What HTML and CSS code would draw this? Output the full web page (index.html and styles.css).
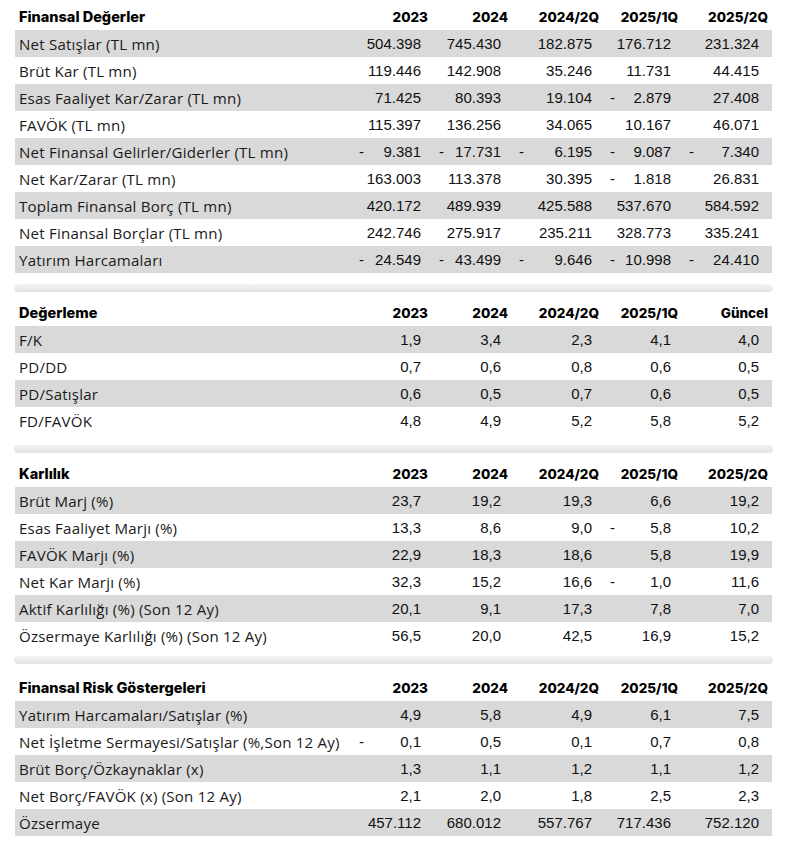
FILE: index.html
```html
<!DOCTYPE html>
<html lang="tr">
<head>
<meta charset="utf-8">
<title>Finansal Değerler</title>
<link rel="stylesheet" href="styles.css">
</head>
<body>
<div class="page">

  <section class="block">
    <div class="row head"><div class="lbl">Finansal Değerler</div><div class="h">2023</div><div class="h">2024</div><div class="h">2024/2Q</div><div class="h">2025/1Q</div><div class="h">2025/2Q</div></div>
    <div class="row alt"><div class="lbl">Net Satışlar (TL mn)</div><div class="c"><span></span><span>504.398</span></div><div class="c"><span></span><span>745.430</span></div><div class="c"><span></span><span>182.875</span></div><div class="c"><span></span><span>176.712</span></div><div class="c"><span></span><span>231.324</span></div></div>
    <div class="row"><div class="lbl">Brüt Kar (TL mn)</div><div class="c"><span></span><span>119.446</span></div><div class="c"><span></span><span>142.908</span></div><div class="c"><span></span><span>35.246</span></div><div class="c"><span></span><span>11.731</span></div><div class="c"><span></span><span>44.415</span></div></div>
    <div class="row alt"><div class="lbl">Esas Faaliyet Kar/Zarar (TL mn)</div><div class="c"><span></span><span>71.425</span></div><div class="c"><span></span><span>80.393</span></div><div class="c"><span></span><span>19.104</span></div><div class="c"><span>-</span><span>2.879</span></div><div class="c"><span></span><span>27.408</span></div></div>
    <div class="row"><div class="lbl">FAVÖK (TL mn)</div><div class="c"><span></span><span>115.397</span></div><div class="c"><span></span><span>136.256</span></div><div class="c"><span></span><span>34.065</span></div><div class="c"><span></span><span>10.167</span></div><div class="c"><span></span><span>46.071</span></div></div>
    <div class="row alt"><div class="lbl">Net Finansal Gelirler/Giderler (TL mn)</div><div class="c"><span>-</span><span>9.381</span></div><div class="c"><span>-</span><span>17.731</span></div><div class="c"><span>-</span><span>6.195</span></div><div class="c"><span>-</span><span>9.087</span></div><div class="c"><span>-</span><span>7.340</span></div></div>
    <div class="row"><div class="lbl">Net Kar/Zarar (TL mn)</div><div class="c"><span></span><span>163.003</span></div><div class="c"><span></span><span>113.378</span></div><div class="c"><span></span><span>30.395</span></div><div class="c"><span>-</span><span>1.818</span></div><div class="c"><span></span><span>26.831</span></div></div>
    <div class="row alt"><div class="lbl">Toplam Finansal Borç (TL mn)</div><div class="c"><span></span><span>420.172</span></div><div class="c"><span></span><span>489.939</span></div><div class="c"><span></span><span>425.588</span></div><div class="c"><span></span><span>537.670</span></div><div class="c"><span></span><span>584.592</span></div></div>
    <div class="row"><div class="lbl">Net Finansal Borçlar (TL mn)</div><div class="c"><span></span><span>242.746</span></div><div class="c"><span></span><span>275.917</span></div><div class="c"><span></span><span>235.211</span></div><div class="c"><span></span><span>328.773</span></div><div class="c"><span></span><span>335.241</span></div></div>
    <div class="row alt"><div class="lbl">Yatırım Harcamaları</div><div class="c"><span>-</span><span>24.549</span></div><div class="c"><span>-</span><span>43.499</span></div><div class="c"><span>-</span><span>9.646</span></div><div class="c"><span>-</span><span>10.998</span></div><div class="c"><span>-</span><span>24.410</span></div></div>
  </section>

  <div class="bar bar-a"></div>

  <section class="block">
    <div class="row head"><div class="lbl">Değerleme</div><div class="h">2023</div><div class="h">2024</div><div class="h">2024/2Q</div><div class="h">2025/1Q</div><div class="h">Güncel</div></div>
    <div class="row alt"><div class="lbl">F/K</div><div class="c"><span></span><span>1,9</span></div><div class="c"><span></span><span>3,4</span></div><div class="c"><span></span><span>2,3</span></div><div class="c"><span></span><span>4,1</span></div><div class="c"><span></span><span>4,0</span></div></div>
    <div class="row"><div class="lbl">PD/DD</div><div class="c"><span></span><span>0,7</span></div><div class="c"><span></span><span>0,6</span></div><div class="c"><span></span><span>0,8</span></div><div class="c"><span></span><span>0,6</span></div><div class="c"><span></span><span>0,5</span></div></div>
    <div class="row alt"><div class="lbl">PD/Satışlar</div><div class="c"><span></span><span>0,6</span></div><div class="c"><span></span><span>0,5</span></div><div class="c"><span></span><span>0,7</span></div><div class="c"><span></span><span>0,6</span></div><div class="c"><span></span><span>0,5</span></div></div>
    <div class="row"><div class="lbl">FD/FAVÖK</div><div class="c"><span></span><span>4,8</span></div><div class="c"><span></span><span>4,9</span></div><div class="c"><span></span><span>5,2</span></div><div class="c"><span></span><span>5,8</span></div><div class="c"><span></span><span>5,2</span></div></div>
  </section>

  <div class="bar bar-a"></div>

  <section class="block">
    <div class="row head"><div class="lbl">Karlılık</div><div class="h">2023</div><div class="h">2024</div><div class="h">2024/2Q</div><div class="h">2025/1Q</div><div class="h">2025/2Q</div></div>
    <div class="row alt"><div class="lbl">Brüt Marj (%)</div><div class="c"><span></span><span>23,7</span></div><div class="c"><span></span><span>19,2</span></div><div class="c"><span></span><span>19,3</span></div><div class="c"><span></span><span>6,6</span></div><div class="c"><span></span><span>19,2</span></div></div>
    <div class="row"><div class="lbl">Esas Faaliyet Marjı (%)</div><div class="c"><span></span><span>13,3</span></div><div class="c"><span></span><span>8,6</span></div><div class="c"><span></span><span>9,0</span></div><div class="c"><span>-</span><span>5,8</span></div><div class="c"><span></span><span>10,2</span></div></div>
    <div class="row alt"><div class="lbl">FAVÖK Marjı (%)</div><div class="c"><span></span><span>22,9</span></div><div class="c"><span></span><span>18,3</span></div><div class="c"><span></span><span>18,6</span></div><div class="c"><span></span><span>5,8</span></div><div class="c"><span></span><span>19,9</span></div></div>
    <div class="row"><div class="lbl">Net Kar Marjı (%)</div><div class="c"><span></span><span>32,3</span></div><div class="c"><span></span><span>15,2</span></div><div class="c"><span></span><span>16,6</span></div><div class="c"><span>-</span><span>1,0</span></div><div class="c"><span></span><span>11,6</span></div></div>
    <div class="row alt"><div class="lbl">Aktif Karlılığı (%) (Son 12 Ay)</div><div class="c"><span></span><span>20,1</span></div><div class="c"><span></span><span>9,1</span></div><div class="c"><span></span><span>17,3</span></div><div class="c"><span></span><span>7,8</span></div><div class="c"><span></span><span>7,0</span></div></div>
    <div class="row"><div class="lbl">Özsermaye Karlılığı (%) (Son 12 Ay)</div><div class="c"><span></span><span>56,5</span></div><div class="c"><span></span><span>20,0</span></div><div class="c"><span></span><span>42,5</span></div><div class="c"><span></span><span>16,9</span></div><div class="c"><span></span><span>15,2</span></div></div>
  </section>

  <div class="bar bar-b"></div>

  <section class="block">
    <div class="row head"><div class="lbl">Finansal Risk Göstergeleri</div><div class="h">2023</div><div class="h">2024</div><div class="h">2024/2Q</div><div class="h">2025/1Q</div><div class="h">2025/2Q</div></div>
    <div class="row alt"><div class="lbl">Yatırım Harcamaları/Satışlar (%)</div><div class="c"><span></span><span>4,9</span></div><div class="c"><span></span><span>5,8</span></div><div class="c"><span></span><span>4,9</span></div><div class="c"><span></span><span>6,1</span></div><div class="c"><span></span><span>7,5</span></div></div>
    <div class="row"><div class="lbl">Net İşletme Sermayesi/Satışlar (%,Son 12 Ay)</div><div class="c"><span>-</span><span>0,1</span></div><div class="c"><span></span><span>0,5</span></div><div class="c"><span></span><span>0,1</span></div><div class="c"><span></span><span>0,7</span></div><div class="c"><span></span><span>0,8</span></div></div>
    <div class="row alt"><div class="lbl">Brüt Borç/Özkaynaklar (x)</div><div class="c"><span></span><span>1,3</span></div><div class="c"><span></span><span>1,1</span></div><div class="c"><span></span><span>1,2</span></div><div class="c"><span></span><span>1,1</span></div><div class="c"><span></span><span>1,2</span></div></div>
    <div class="row"><div class="lbl">Net Borç/FAVÖK (x) (Son 12 Ay)</div><div class="c"><span></span><span>2,1</span></div><div class="c"><span></span><span>2,0</span></div><div class="c"><span></span><span>1,8</span></div><div class="c"><span></span><span>2,5</span></div><div class="c"><span></span><span>2,3</span></div></div>
    <div class="row alt"><div class="lbl">Özsermaye</div><div class="c"><span></span><span>457.112</span></div><div class="c"><span></span><span>680.012</span></div><div class="c"><span></span><span>557.767</span></div><div class="c"><span></span><span>717.436</span></div><div class="c"><span></span><span>752.120</span></div></div>
  </section>

</div>
</body>
</html>
```

FILE: styles.css
```css
html, body {
  margin: 0;
  padding: 0;
  background: #ffffff;
}

.page {
  width: 757px;
  padding: 3px 0 0 15px;
  color: #1a1a1a;
}

.block {
  display: flex;
  flex-direction: column;
}

.row {
  display: grid;
  grid-template-columns: 337px 80px 80px 91px 79px 90px;
  height: 27px;
  align-items: center;
}

.row.alt {
  background: #d9d9d9;
}

.lbl {
  padding-left: 4px;
  font-family: "Open Sans", "Noto Sans", sans-serif;
  font-size: 15.1px;
  white-space: nowrap;
  letter-spacing: 0.2px;
}

.head .lbl {
  font-family: "Inter", "Liberation Sans", sans-serif;
  font-weight: 800;
  font-size: 14.5px;
  color: #000;
  letter-spacing: 0;
}

.h {
  text-align: right;
  padding-right: 4px;
  font-family: "Inter", "Liberation Sans", sans-serif;
  font-weight: 800;
  font-size: 13.5px;
  color: #000;
}

.c {
  display: flex;
  justify-content: space-between;
  padding: 0 11px 0 7px;
  font-family: "Liberation Sans", Arial, sans-serif;
  font-size: 15px;
  color: #111;
}

.c:last-child {
  padding-right: 13px;
}

.bar {
  width: 759px;
  height: 8px;
  margin-left: -1px;
  border-radius: 4px;
  background: linear-gradient(to bottom, #f3f3f3 0%, #ececec 50%, #e1e1e1 100%);
}

.bar-a {
  margin-top: 11px;
  margin-bottom: 7px;
}

.bar-b {
  margin-top: 7px;
  margin-bottom: 10px;
}
```
